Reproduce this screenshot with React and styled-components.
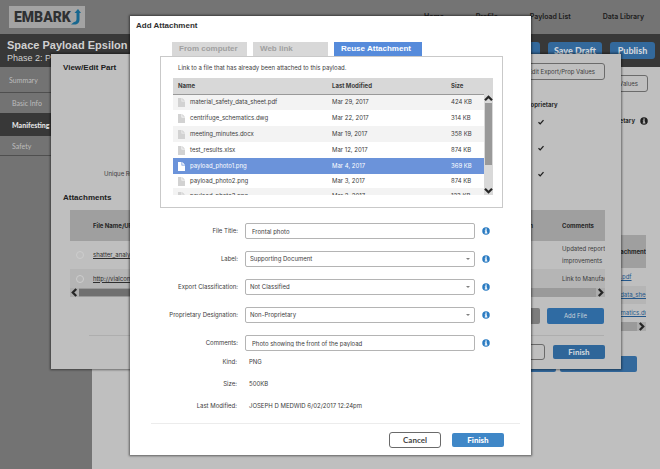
import React, { useState } from "react";
import styled, { createGlobalStyle } from "styled-components";

const FILES = [
  { name: "material_safety_data_sheet.pdf", modified: "Mar 29, 2017", size: "424 KB" },
  { name: "centrifuge_schematics.dwg", modified: "Mar 22, 2017", size: "314 KB" },
  { name: "meeting_minutes.docx", modified: "Mar 19, 2017", size: "358 KB" },
  { name: "test_results.xlsx", modified: "Mar 12, 2017", size: "874 KB" },
  { name: "payload_photo1.png", modified: "Mar 4, 2017", size: "369 KB" },
  { name: "payload_photo2.png", modified: "Mar 3, 2017", size: "874 KB" },
  { name: "payload_photo3.png", modified: "Mar 2, 2017", size: "123 KB" },
];

const TABS = ["From computer", "Web link", "Reuse Attachment"];

/**
 * Icons
 */
function InfoIcon({ color = "#2a7bc2", mark = "#ffffff", size = 8 }) {
  return (
    <svg width={size} height={size} viewBox="0 0 16 16" aria-hidden="true">
      <circle cx="8" cy="8" r="7.5" fill={color} />
      <path d="M6.600 3h3v2.400h-3z M5.600 6.600h4v4.400h1.200v1.800H5.400V11h1.200V8.400h-1z" fill={mark} />
    </svg>
  );
}

function FileIcon({ selected }) {
  return (
    <svg width="7" height="9" viewBox="0 0 14 18" aria-hidden="true">
      <path d="M0 0h7v7h7v11H0z" fill={selected ? "#ffffff" : "#d2d2d2"} />
      <path d="M8.5 0L14 5.5H8.5z" fill={selected ? "#ffffff" : "#d2d2d2"} />
    </svg>
  );
}

function Chevron({ turn = 0 }) {
  return (
    <svg width="9" height="9" viewBox="0 0 18 18" aria-hidden="true">
      <path
        d="M2 12.5l7-7 7 7"
        fill="none"
        stroke="#262626"
        strokeWidth="4.5"
        transform={`rotate(${turn} 9 9)`}
      />
    </svg>
  );
}

function CheckIcon() {
  return (
    <svg width="6" height="6" viewBox="0 0 12 12" role="img" aria-label="Yes">
      <path d="M1 6.5l3.4 3.3L11 2.2" fill="none" stroke="#1f1f1f" strokeWidth="2.6" />
    </svg>
  );
}

function LogoArrow() {
  return (
    <svg width="10" height="16" viewBox="0 0 20 32" aria-hidden="true">
      <path d="M0 31h7c6 0 10-3 10-10V8h3L14 0 7 8h4v12c0 4-2 6-5 6z" fill="#17678f" />
    </svg>
  );
}

/**
 * Page behind the dialogs
 */
function PayloadPage() {
  return (
    <Page>
      <TopBar>
        <Logo>
          EMBARK
          <LogoArrow />
        </Logo>
        <Nav>
          <NavLink href="#home">Home</NavLink>
          <NavLink href="#profile">Profile</NavLink>
          <NavLink href="#payloads">Payload List</NavLink>
          <NavLink href="#library">Data Library</NavLink>
        </Nav>
      </TopBar>
      <TitleBar>
        <div>
          <PageTitle>Space Payload Epsilon</PageTitle>
          <Phase>Phase 2: Payload Details</Phase>
        </div>
        <TitleActions>
          <BarButton>View</BarButton>
          <BarButton>Save Draft</BarButton>
          <BarButton>Publish</BarButton>
        </TitleActions>
      </TitleBar>
      <Body>
        <Sidebar>
          <SideLink href="#summary" $top>Summary</SideLink>
          <SideLink href="#basic">Basic Info</SideLink>
          <SideLink href="#manifesting" $active>Manifesting</SideLink>
          <SideLink href="#safety" $last>Safety</SideLink>
        </Sidebar>
        <Main>
          <OutlineButton>Edit Export/Prop Values</OutlineButton>
          <MainColumnHead>
            Proprietary
            <InfoIcon color="#1f1f1f" mark="#bfbfbf" />
          </MainColumnHead>
          <MainTableWrap>
            <MainTable>
              <thead>
                <tr><th>Attachment</th></tr>
              </thead>
              <tbody>
                <tr><td><a href="#file1">shatter_analysis.pdf</a></td></tr>
                <tr><td><a href="#file2">material_safety_data_sheet.pdf</a></td></tr>
                <tr><td><a href="#file3">centrifuge_schematics.dwg</a></td></tr>
              </tbody>
            </MainTable>
            <HorizontalBar>
              <Chevron turn={-90} />
              <Chevron turn={90} />
            </HorizontalBar>
          </MainTableWrap>
          <MainActions>
            <DimButton aria-label="Previous" />
            <DimButton aria-label="Next" />
          </MainActions>
        </Main>
      </Body>
    </Page>
  );
}

function PartDialog() {
  return (
    <PartLayer>
      <PartBox role="dialog" aria-label="View/Edit Part">
        <PartHeader>
          <PartTitle>View/Edit Part</PartTitle>
          <OutlineButton>Edit Export/Prop Values</OutlineButton>
        </PartHeader>
        <PartGrid>
          <PartHead>Proprietary</PartHead>
          <PartLabel>Part Name:</PartLabel>
          <CheckIcon />
          <PartLabel />
          <CheckIcon />
          <PartLabel>Unique Reference #:</PartLabel>
          <CheckIcon />
        </PartGrid>
        <PartTitle>Attachments</PartTitle>
        <PartTableWrap>
          <PartTable>
            <colgroup>
              <col width="23" />
              <col />
              <col width="140" />
              <col width="43" />
            </colgroup>
            <thead>
              <tr>
                <th aria-label="Selected" />
                <th>File Name/URL</th>
                <EndHead>Designation</EndHead>
                <th>Comments</th>
              </tr>
            </thead>
            <tbody>
              <TallRow>
                <td><Radio name="part-file" aria-label="shatter_analysis.pdf" /></td>
                <td><a href="#shatter">shatter_analysis.pdf</a></td>
                <td />
                <td>Updated report<br />improvements</td>
              </TallRow>
              <StripeRow>
                <td><Radio name="part-file" aria-label="http://vialcom.com" /></td>
                <td><a href="#vialcom">http://vialcom.com</a></td>
                <td />
                <td>Link to Manufacturer</td>
              </StripeRow>
            </tbody>
          </PartTable>
          <HorizontalBar>
            <Chevron turn={-90} />
            <HorizontalThumb />
            <Chevron turn={90} />
          </HorizontalBar>
        </PartTableWrap>
        <PartActions>
          <SmallButton $grey>Remove</SmallButton>
          <SmallButton>Add File</SmallButton>
        </PartActions>
        <PartFooter>
          <CancelButton $dim>Cancel</CancelButton>
          <FinishButton $dim>Finish</FinishButton>
        </PartFooter>
      </PartBox>
    </PartLayer>
  );
}

function Field({ id, label, children }) {
  return (
    <>
      <FieldLabel htmlFor={id}>{label}</FieldLabel>
      {children}
      <InfoIcon />
    </>
  );
}

function SelectField({ id, label, value }) {
  return (
    <Field id={id} label={label}>
      <SelectWrap>
        <Select id={id} defaultValue={value}>
          <option>{value}</option>
        </Select>
      </SelectWrap>
    </Field>
  );
}

function FilePicker() {
  const [selected, setSelected] = useState(4);

  return (
    <FileFrame>
      <FileTable>
        <colgroup>
          <col />
          <col width="119" />
          <col width="42" />
        </colgroup>
        <thead>
          <tr>
            <th>Name</th>
            <th>Last Modified</th>
            <th>Size</th>
          </tr>
        </thead>
        <tbody>
          {FILES.map((file, i) => (
            <FileRow
              key={file.name}
              $selected={i === selected}
              $tight={i === selected + 1}
              onClick={() => setSelected(i)}
            >
              <td>
                <FileName>
                  <FileIcon selected={i === selected} />
                  {file.name}
                </FileName>
              </td>
              <td>{file.modified}</td>
              <td>{file.size}</td>
            </FileRow>
          ))}
        </tbody>
      </FileTable>
      <VerticalBar>
        <Chevron />
        <VerticalThumb />
        <Chevron turn={180} />
      </VerticalBar>
    </FileFrame>
  );
}

function AttachmentDialog() {
  const [tab, setTab] = useState(2);

  return (
    <AttachmentLayer>
      <AttachmentBox role="dialog" aria-label="Add Attachment">
        <DialogTitle>Add Attachment</DialogTitle>
        <Tabs role="tablist">
          {TABS.map((name, i) => (
            <Tab key={name} role="tab" aria-selected={i === tab} $active={i === tab} onClick={() => setTab(i)}>
              {name}
            </Tab>
          ))}
        </Tabs>
        <Panel role="tabpanel">
          <Hint>Link to a file that has already been attached to this payload.</Hint>
          <FilePicker />
        </Panel>
        <Form>
          <Field id="title" label="File Title:">
            <TextInput id="title" defaultValue="Frontal photo" />
          </Field>
          <SelectField id="label" label="Label:" value="Supporting Document" />
          <SelectField id="export" label="Export Classification:" value="Not Classified" />
          <SelectField id="designation" label="Proprietary Designation:" value="Non-Proprietary" />
          <Field id="comments" label="Comments:">
            <TextInput id="comments" defaultValue="Photo showing the front of the payload" />
          </Field>
        </Form>
        <Details>
          <dt>Kind:</dt>
          <dd>PNG</dd>
          <dt>Size:</dt>
          <dd>500KB</dd>
          <dt>Last Modified:</dt>
          <dd>JOSEPH D MEDWID 6/02/2017 12:24pm</dd>
        </Details>
        <Footer>
          <CancelButton>Cancel</CancelButton>
          <FinishButton>Finish</FinishButton>
        </Footer>
      </AttachmentBox>
    </AttachmentLayer>
  );
}

export default function App() {
  return (
    <Screen>
      <GlobalStyle />
      <PayloadPage />
      <PartDialog />
      <AttachmentDialog />
    </Screen>
  );
}

/**
 * Styled components declaration
 */
const GlobalStyle = createGlobalStyle`
  * {
    box-sizing: border-box;
  }
  body {
    margin: 0;
    font-family: Inter, "Liberation Sans", sans-serif;
    font-size: 6px;
    line-height: 8px;
    color: #3c3c3c;
  }
  button, input, select {
    font: inherit;
    color: inherit;
    margin: 0;
  }
  h1, h2, p, dl, dd {
    margin: 0;
  }
  svg {
    display: block;
    flex: none;
  }
`;

const Screen = styled.div`
  position: relative;
  min-height: 100vh;
  overflow: hidden;
`;

const Page = styled.div`
  display: flex;
  flex-direction: column;
  min-height: 100vh;
  background: #bfbfbf;
`;

const TopBar = styled.header`
  display: flex;
  align-items: center;
  justify-content: space-between;
  height: 34px;
  padding: 0 16px 0 9px;
  background: #747474;
`;

const Logo = styled.div`
  display: flex;
  align-items: center;
  width: 76px;
  height: 22px;
  padding-left: 5px;
  background: #a3a3a3;
  color: #2f3133;
  font: 900 14px/22px Roboto, sans-serif;
`;

const Nav = styled.nav`
  display: flex;
  gap: 32px;
`;

const NavLink = styled.a`
  color: #1c1c1c;
  font: 600 7px/10px Inter, sans-serif;
  text-decoration: none;
`;

const TitleBar = styled.div`
  display: flex;
  justify-content: space-between;
  height: 33px;
  padding: 4px 5px 0 7px;
  background: #383838;
  color: #d0d0d0;
  font-family: "Liberation Sans", Arial, sans-serif;
`;

const PageTitle = styled.h1`
  font-size: 11px;
  line-height: 14px;
`;

const Phase = styled.p`
  font-size: 9px;
  line-height: 12px;
`;

const TitleActions = styled.div`
  display: flex;
  gap: 8px;
  padding-top: 4px;
`;

const BarButton = styled.button`
  min-width: 45px;
  height: 17px;
  padding: 0 6px;
  border: 0;
  border-radius: 3px;
  background: #33699c;
  color: #cfd5db;
  font: 900 9px/16px Lato, sans-serif;
`;

const Body = styled.div`
  display: flex;
  flex: 1;
`;

const Sidebar = styled.nav`
  width: 92px;
  background: #737373;
`;

const SideLink = styled.a`
  display: flex;
  align-items: center;
  height: ${(props) => (props.$top ? 26 : props.$active ? 23 : 20)}px;
  padding-left: ${(props) => (props.$top ? 9 : 12)}px;
  border-bottom: ${(props) => (props.$top || props.$last ? "1px solid #4f4f4f" : "0")};
  background: ${(props) => (props.$active ? "#383838" : "transparent")};
  color: ${(props) => (props.$active ? "#e2e2e2" : "#bdbdbd")};
  font: ${(props) => (props.$active ? 900 : 400)} 7px/10px Lato, sans-serif;
  text-decoration: none;
`;

const Main = styled.main`
  display: flex;
  flex: 1;
  flex-direction: column;
  align-items: flex-end;
  padding: 8px 12px 0;
`;

const OutlineButton = styled.button`
  height: 17px;
  padding: 0 9px;
  border: 1px solid #6b6b6b;
  border-radius: 3px;
  background: transparent;
  color: #404040;
`;

const MainColumnHead = styled.div`
  display: flex;
  align-items: center;
  gap: 5px;
  height: 16px;
  margin-top: 21px;
  color: #2b2b2b;
  font-weight: 700;
`;

const MainTableWrap = styled.div`
  width: 110px;
  margin: 106px 2px 25px 0;
  overflow: hidden;
`;

const MainTable = styled.table`
  width: 100%;
  table-layout: fixed;
  border-collapse: collapse;

  th {
    height: 33px;
    padding: 0;
    background: #9f9f9f;
    color: #262626;
    text-align: right;
  }
  td {
    height: 18px;
    padding: 0 0 0 39px;
    white-space: nowrap;
  }
  tr:nth-child(2) td {
    background: #b5b5b5;
  }
  a {
    color: #24588c;
  }
`;

const HorizontalBar = styled.div`
  display: flex;
  align-items: center;
  justify-content: space-between;
  height: 9px;
  background: #9a9a9a;

  svg {
    background: #acacac;
  }
`;

const HorizontalThumb = styled.div`
  flex: 1;
  height: 7px;
  margin-right: 35%;
  background: #707070;
`;

const MainActions = styled.div`
  display: flex;
  gap: 4px;
  margin-right: 11px;
`;

const DimButton = styled.button`
  width: 77px;
  height: 16px;
  border: 0;
  border-radius: 2px;
  background: #33699c;
`;

const PartLayer = styled.div`
  position: absolute;
  inset: 0;
  padding: 54px 39px 0 51px;
`;

const PartBox = styled.section`
  padding-bottom: 9px;
  background: #bfbfbf;
  box-shadow: 0 0 2px 1px rgba(0, 0, 0, 0.45);
`;

const PartHeader = styled.div`
  display: flex;
  justify-content: space-between;
  padding: 9px 16px 21px 0;
`;

const PartTitle = styled.h2`
  padding-left: 12px;
  color: #202020;
  font: 700 8px/10px "Liberation Sans", Arial, sans-serif;
`;

const PartGrid = styled.div`
  display: grid;
  grid-template-columns: 111px 36px;
  grid-template-rows: 8px repeat(3, 26px);
  justify-content: space-between;
  align-items: center;
  padding-right: 62px;
  margin-bottom: 6px;

  svg {
    justify-self: center;
  }
`;

const PartHead = styled.span`
  grid-column: 2;
  color: #2b2b2b;
  font-weight: 700;
  text-align: center;
`;

const PartLabel = styled.span`
  text-align: right;
`;

const PartTableWrap = styled.div`
  margin: 7px 16px 0 19px;
  overflow: hidden;
`;

const PartTable = styled.table`
  width: 100%;
  table-layout: fixed;
  border-collapse: collapse;
  line-height: 12px;

  th, td {
    padding: 0;
    overflow: hidden;
    text-align: left;
    white-space: nowrap;
  }
  th {
    height: 31px;
    background: #9f9f9f;
    color: #262626;
  }
  a {
    color: #2e2e2e;
  }
`;

const EndHead = styled.th`
  && {
    padding-right: 29px;
    text-align: right;
  }
`;

const TallRow = styled.tr`
  height: 28px;
`;

const StripeRow = styled.tr`
  height: 19px;
  background: #b5b5b5;
`;

const Radio = styled.input.attrs({ type: "radio" })`
  display: block;
  width: 8px;
  height: 8px;
  margin-left: 6px;
  appearance: none;
  border: 1px solid #cdcdcd;
  border-radius: 50%;
`;

const PartActions = styled.div`
  display: flex;
  justify-content: flex-end;
  gap: 7px;
  margin: 11px 17px 0 38px;
  padding-bottom: 11px;
  border-bottom: 1px solid #aeaeae;
`;

const SmallButton = styled.button`
  width: 57px;
  height: 16px;
  padding: 0;
  border: 0;
  border-radius: 2px;
  background: ${(props) => (props.$grey ? "#7d7d7d" : "#2f6ba3")};
  color: #c9d2da;
`;

const PartFooter = styled.div`
  display: flex;
  align-items: center;
  justify-content: flex-end;
  gap: 8px;
  margin: 8px 16px 0 0;
`;

const CancelButton = styled.button`
  width: 52px;
  height: 16px;
  padding: 0;
  border: 1px solid #6a6a6a;
  border-radius: 3px;
  background: ${(props) => (props.$dim ? "transparent" : "#ffffff")};
  color: #444444;
  font: 700 8px/12px Lato, sans-serif;
`;

const FinishButton = styled.button`
  width: 52px;
  height: 14px;
  padding: 0;
  border: 0;
  border-radius: 2px;
  background: ${(props) => (props.$dim ? "#2f6699" : "#3f87c7")};
  color: ${(props) => (props.$dim ? "#ccd4dc" : "#ffffff")};
  font: 900 8px/12px Lato, sans-serif;
`;

const AttachmentLayer = styled.div`
  position: absolute;
  inset: 0;
  padding: 16px 129px 0 130px;
`;

const AttachmentBox = styled.section`
  padding-bottom: 7px;
  background: #ffffff;
  box-shadow: 0 0 2px 1px rgba(0, 0, 0, 0.5);
`;

const DialogTitle = styled.h2`
  padding: 5px 6px 0;
  color: #303030;
  font: 700 8px/10px "Liberation Sans", Arial, sans-serif;
`;

const Tabs = styled.div`
  display: flex;
  gap: 6px;
  padding: 11px 42px 0;
`;

const Tab = styled.button`
  width: ${(props) => (props.$active ? 88 : 75)}px;
  height: 14px;
  padding: 0 7px;
  border: 0;
  background: ${(props) => (props.$active ? "#568bdb" : "#d8d8d8")};
  color: ${(props) => (props.$active ? "#ffffff" : "#a0a0a0")};
  font: 700 8px/10px "Liberation Sans", Arial, sans-serif;
  text-align: left;
`;

const Panel = styled.div`
  margin: 0 28px 0 30px;
  padding: 7px 9px 12px 12px;
  border: 1px solid #c9c9c9;
`;

const Hint = styled.p`
  padding: 0 0 6px 5px;
`;

const FileFrame = styled.div`
  position: relative;
  height: 117px;
  overflow: hidden;
`;

const FileTable = styled.table`
  width: 100%;
  table-layout: fixed;
  border-collapse: collapse;

  th, td {
    padding: 0;
    text-align: left;
  }
  th {
    height: 16px;
    background: #d8d8d8;
    border-bottom: 1px solid #999999;
  }
  th:first-child, td:first-child {
    padding-left: 5px;
  }
`;

const FileRow = styled.tr`
  height: ${(props) => (props.$tight ? 14 : 16)}px;
  background: ${(props) => (props.$selected ? "#6b93da" : "#ffffff")};
  color: ${(props) => (props.$selected ? "#ffffff" : "#3c3c3c")};
  cursor: pointer;

  &:nth-child(odd) {
    background: ${(props) => (props.$selected ? "#6b93da" : "#f3f3f3")};
  }
`;

const FileName = styled.span`
  display: flex;
  align-items: center;
  gap: 5px;
`;

const VerticalBar = styled.div`
  position: absolute;
  top: 16px;
  right: 0;
  bottom: 0;
  display: flex;
  flex-direction: column;
  align-items: center;
  justify-content: space-between;
  width: 9px;
  background: #d9d9d9;
`;

const VerticalThumb = styled.div`
  width: 7px;
  height: 62px;
  margin-bottom: auto;
  background: #999999;
`;

const Form = styled.div`
  display: grid;
  grid-template-columns: 78px 1fr 8px;
  column-gap: 7px;
  row-gap: 12px;
  align-items: center;
  margin: 15px 41px 0 30px;
`;

const FieldLabel = styled.label`
  text-align: right;
`;

const TextInput = styled.input`
  width: 100%;
  height: 16px;
  padding: 0 6px;
  border: 1px solid #b4b4b4;
  border-radius: 2px;
  background: #ffffff;
`;

const SelectWrap = styled.div`
  position: relative;

  &::after {
    content: "";
    position: absolute;
    top: 7px;
    right: 5px;
    border: 2px solid transparent;
    border-top-color: #808080;
    pointer-events: none;
  }
`;

const Select = styled.select`
  display: block;
  width: 100%;
  height: 16px;
  padding: 0 4px;
  appearance: none;
  border: 1px solid #b4b4b4;
  border-radius: 2px;
  background: #ffffff;
`;

const Details = styled.dl`
  display: grid;
  grid-template-columns: 77px 1fr;
  grid-auto-rows: 22px;
  column-gap: 12px;
  align-items: center;
  margin: 0 28px 0 30px;

  dt {
    text-align: right;
  }
`;

const Footer = styled.div`
  display: flex;
  align-items: center;
  justify-content: flex-end;
  gap: 11px;
  margin: 6px 11px 0 21px;
  padding: 8px 16px 0 0;
  border-top: 1px solid #ececec;
`;
